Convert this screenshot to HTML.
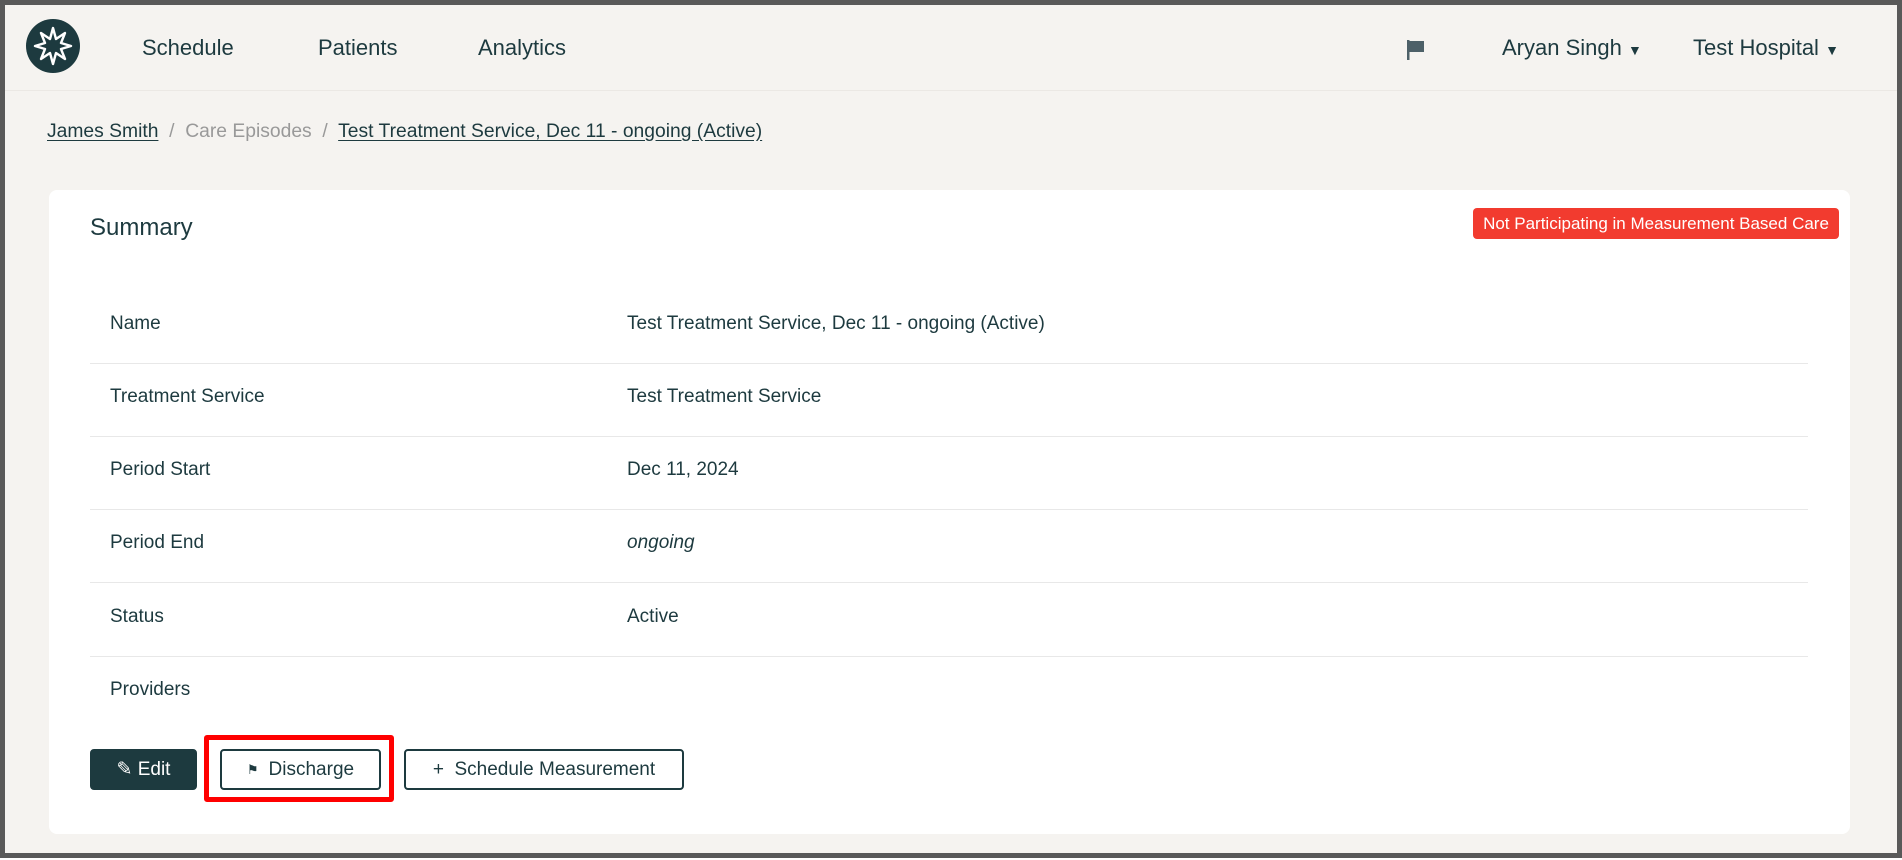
<!DOCTYPE html>
<html><head><meta charset="utf-8"><style>
*{box-sizing:border-box;margin:0;padding:0}
body{width:1902px;height:860px;overflow:hidden;background:#fff;font-family:"Liberation Sans",sans-serif;color:#1d3a3f}
.frame{position:absolute;left:0;top:0;width:1902px;height:858px;border:5px solid #595959;background:#f5f3f0}
.abs{position:absolute}
.nav{font-size:22px;top:30px}
.bc{top:116px;font-size:19.3px}
.bc u{text-decoration:underline;text-underline-offset:3px}
.card{left:44px;top:185px;width:1801px;height:644px;background:#fff;border-radius:8px}
.row{position:absolute;left:41px;width:1718px;height:73px;border-bottom:1px solid #e8e8e8;font-size:19px}
.row span{position:absolute;top:22px}
.btn{position:absolute;top:744px;height:41px;border:2px solid #1d3a3f;border-radius:4px;font-size:19px;display:flex;align-items:center;justify-content:center;gap:10px;background:#fff}
</style></head><body>
<div class="frame">
<svg class="abs" style="left:21px;top:14px" width="54" height="54" viewBox="0 0 54 54"><circle cx="27" cy="27" r="27" fill="#1d3a3f"/><path d="M27 9 L30 20 L39 14 L35 24 L45 27 L35 30 L39 40 L30 34 L27 45 L24 34 L15 40 L19 30 L9 27 L19 24 L15 14 L24 20 Z" fill="none" stroke="#fff" stroke-width="2.4" stroke-linejoin="round"/></svg>
<div class="abs nav" style="left:137px">Schedule</div>
<div class="abs nav" style="left:313px">Patients</div>
<div class="abs nav" style="left:473px">Analytics</div>
<svg class="abs" style="left:1400px;top:33px" width="22" height="24" viewBox="0 0 22 24"><rect x="2" y="2" width="2.5" height="20" fill="#4d6068"/><path d="M4.5 3 H19 V14 H4.5Z" fill="#4d6068"/></svg>
<div class="abs nav" style="left:1497px">Aryan Singh <span style="font-size:14px">▼</span></div>
<div class="abs nav" style="left:1688px">Test Hospital <span style="font-size:14px">▼</span></div>
<div class="abs" style="left:0;top:85px;width:1892px;height:1px;background:#ebe8e4"></div>
<div class="abs bc" style="left:42px"><u>James Smith</u> <span style="color:#999">&nbsp;/&nbsp; Care Episodes &nbsp;/&nbsp;</span> <u>Test Treatment Service, Dec 11 - ongoing (Active)</u></div>
<div class="abs card">
<div class="abs" style="left:41px;top:24px;font-size:24px">Summary</div>
<div class="abs" style="left:1424px;top:18px;width:366px;height:31px;background:#f23b2f;color:#fff;border-radius:4px;font-size:17px;display:flex;align-items:center;justify-content:center">Not Participating in Measurement Based Care</div>
<div class="row" style="top:101px"><span style="left:20px">Name</span><span style="left:537px">Test Treatment Service, Dec 11 - ongoing (Active)</span></div>
<div class="row" style="top:174px"><span style="left:20px">Treatment Service</span><span style="left:537px">Test Treatment Service</span></div>
<div class="row" style="top:247px"><span style="left:20px">Period Start</span><span style="left:537px">Dec 11, 2024</span></div>
<div class="row" style="top:320px"><span style="left:20px">Period End</span><span style="left:537px;font-style:italic">ongoing</span></div>
<div class="row" style="top:394px"><span style="left:20px">Status</span><span style="left:537px">Active</span></div>
<div class="row" style="top:467px;border:none"><span style="left:20px">Providers</span></div>
</div>
<div class="btn" style="left:85px;width:107px;background:#1d3a3f;color:#fff">✎ Edit</div>
<div class="abs" style="left:199px;top:730px;width:190px;height:67px;border:5px solid #f00;border-radius:3px"></div>
<div class="btn" style="left:215px;width:161px"><span style="font-size:13px">⚑</span>Discharge</div>
<div class="btn" style="left:399px;width:280px">+&nbsp; Schedule Measurement</div>
</div>
</body></html>
